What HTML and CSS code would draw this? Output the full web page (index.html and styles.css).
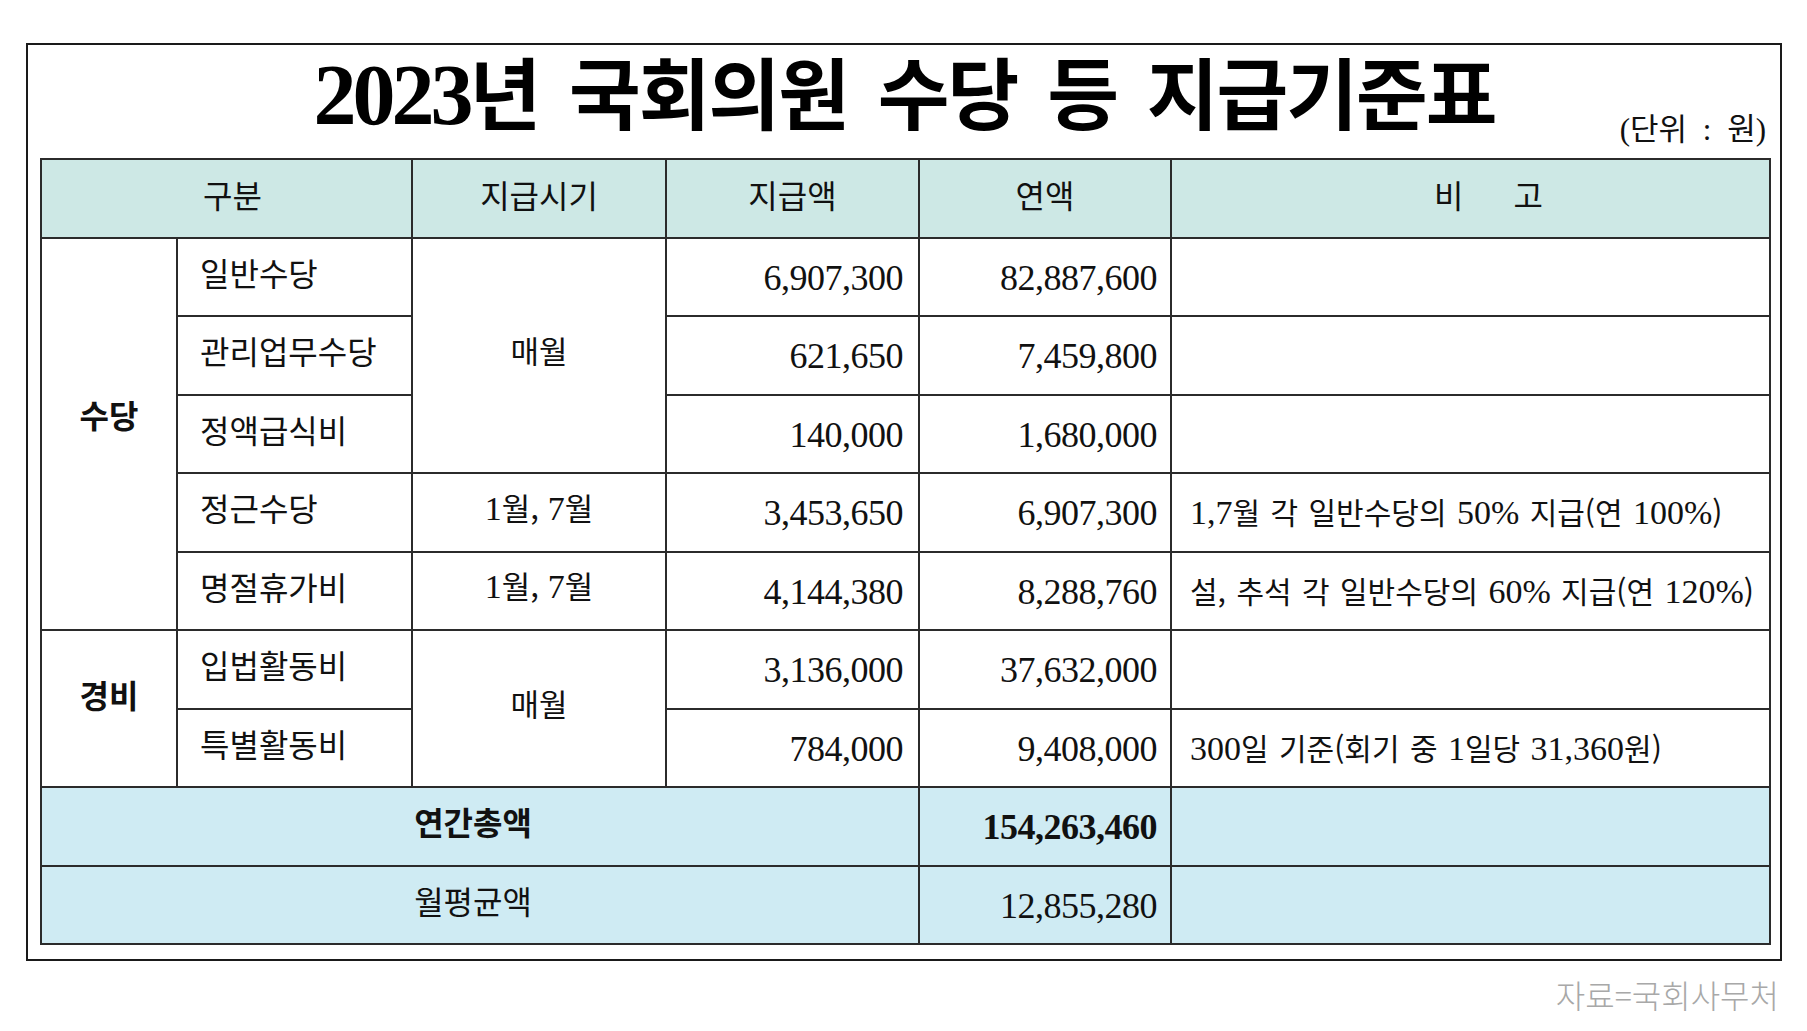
FILE: index.html
```html
<!DOCTYPE html>
<html lang="ko">
<head>
<meta charset="utf-8">
<title>2023년 국회의원 수당 등 지급기준표</title>
<link rel="stylesheet" href="styles.css">
</head>
<body>
<div class="frame">
  <div class="title-area">
    <h1 class="title"><span class="yr">2023</span>년 국회의원 수당 등 지급기준표</h1>
    <div class="unit">(단위 : 원)</div>
  </div>
  <table class="grid">
    <colgroup>
      <col class="c1"><col class="c2"><col class="c3"><col class="c4"><col class="c5"><col class="c6">
    </colgroup>
    <thead>
      <tr class="head">
        <th colspan="2" class="h-cat">구분</th>
        <th>지급시기</th>
        <th>지급액</th>
        <th>연액</th>
        <th class="h-note">비<span class="gap"></span>고</th>
      </tr>
    </thead>
    <tbody>
      <tr>
        <td rowspan="5" class="cat cat-a">수당</td>
        <td class="item">일반수당</td>
        <td rowspan="3" class="when">매월</td>
        <td class="num">6,907,300</td>
        <td class="num num2">82,887,600</td>
        <td class="note"></td>
      </tr>
      <tr>
        <td class="item">관리업무수당</td>
        <td class="num">621,650</td>
        <td class="num num2">7,459,800</td>
        <td class="note"></td>
      </tr>
      <tr>
        <td class="item">정액급식비</td>
        <td class="num">140,000</td>
        <td class="num num2">1,680,000</td>
        <td class="note"></td>
      </tr>
      <tr>
        <td class="item">정근수당</td>
        <td class="when"><span class="d">1</span>월, <span class="d">7</span>월</td>
        <td class="num">3,453,650</td>
        <td class="num num2">6,907,300</td>
        <td class="note"><span class="d">1,7</span>월 각 일반수당의 <span class="d">50%</span> 지급(연 <span class="d">100%</span>)</td>
      </tr>
      <tr>
        <td class="item">명절휴가비</td>
        <td class="when"><span class="d">1</span>월, <span class="d">7</span>월</td>
        <td class="num">4,144,380</td>
        <td class="num num2">8,288,760</td>
        <td class="note">설, 추석 각 일반수당의 <span class="d">60%</span> 지급(연 <span class="d">120%</span>)</td>
      </tr>
      <tr>
        <td rowspan="2" class="cat cat-b">경비</td>
        <td class="item">입법활동비</td>
        <td rowspan="2" class="when">매월</td>
        <td class="num">3,136,000</td>
        <td class="num num2">37,632,000</td>
        <td class="note"></td>
      </tr>
      <tr>
        <td class="item">특별활동비</td>
        <td class="num">784,000</td>
        <td class="num num2">9,408,000</td>
        <td class="note"><span class="d">300</span>일 기준(회기 중 <span class="d">1</span>일당 <span class="d">31,360</span>원)</td>
      </tr>
      <tr class="total">
        <td colspan="4" class="tlabel strong">연간총액</td>
        <td class="num num2 strong">154,263,460</td>
        <td class="note"></td>
      </tr>
      <tr class="total">
        <td colspan="4" class="tlabel">월평균액</td>
        <td class="num num2">12,855,280</td>
        <td class="note"></td>
      </tr>
    </tbody>
  </table>
</div>
<div class="source">자료=국회사무처</div>
</body>
</html>
```

FILE: styles.css
```css
* { box-sizing: border-box; }

body {
  margin: 0;
  background: #ffffff;
  color: #111111;
  font-family: "Noto Sans CJK KR", "Noto Sans", sans-serif;
}

.frame {
  margin: 43px 0 0 26px;
  width: 1756px;
  border: 2px solid #1a1a1a;
  padding: 0 11px 14px 12px;
}

.title-area {
  height: 113px;
  display: grid;
}

.title {
  grid-area: 1 / 1;
  align-self: start;
  justify-self: center;
  margin: 6px 0 0 0;
  font-family: "Noto Sans CJK KR", sans-serif;
  font-weight: 700;
  font-size: 78px;
  line-height: 1;
  letter-spacing: -2px;
  word-spacing: 10px;
  white-space: nowrap;
  color: #000000;
}

.title .yr {
  font-family: "Liberation Serif", serif;
  font-weight: 700;
  font-size: 86px;
  letter-spacing: -4px;
}

.unit {
  grid-area: 1 / 1;
  align-self: end;
  justify-self: end;
  margin: 0 3px 13px 0;
  font-family: "Liberation Serif", "Noto Sans CJK KR", serif;
  font-size: 31px;
  line-height: 1;
  word-spacing: 8px;
  color: #111111;
}

.grid {
  width: 1729px;
  table-layout: fixed;
  border-collapse: collapse;
}

.c1 { width: 136px; }
.c2 { width: 235px; }
.c3 { width: 254px; }
.c4 { width: 253px; }
.c5 { width: 252px; }
.c6 { width: 599px; }

.grid th,
.grid td {
  border: 2px solid #2b2b2b;
  padding: 0 0 10px 0;
  vertical-align: middle;
  font-weight: 400;
  white-space: nowrap;
}

.grid tr { height: 78.5px; }

.grid .head th {
  background: #cde8e5;
  font-size: 32px;
  font-weight: 400;
  text-align: center;
  padding: 0 0 8px 0;
}

.grid .head .h-cat { padding-left: 12px; }
.grid .head .h-note { padding-left: 36px; }
.gap { display: inline-block; width: 50px; }

.grid .item {
  padding-left: 22px;
  font-size: 32px;
  text-align: left;
}

.grid .cat {
  text-align: center;
  font-size: 32px;
  font-weight: 700;
}

.grid .cat-a { padding-bottom: 40px; }
.grid .cat-b { padding-bottom: 30px; }

.grid .when {
  text-align: center;
  font-size: 31px;
  padding-bottom: 12px;
}

.grid .num {
  text-align: right;
  font-family: "Liberation Serif", serif;
  font-size: 36px;
  letter-spacing: -0.5px;
  padding: 2px 15px 0 0;
}

.grid .num2 { padding-right: 13px; }

.grid .note {
  padding: 0 0 2px 18px;
  font-size: 30px;
  word-spacing: 2px;
  text-align: left;
}

.d {
  font-family: "Liberation Serif", serif;
  font-size: 34px;
}

.grid .total td { background: #cfebf3; }

.grid .tlabel {
  text-align: center;
  font-size: 32px;
  padding-right: 14px;
}

.grid .strong { font-weight: 700; }

.source {
  width: 1756px;
  margin: 14px 0 0 26px;
  padding-right: 3px;
  text-align: right;
  font-family: "Noto Sans CJK KR", sans-serif;
  font-weight: 300;
  font-size: 32px;
  line-height: 1.2;
  color: #a8a8a8;
}
```
